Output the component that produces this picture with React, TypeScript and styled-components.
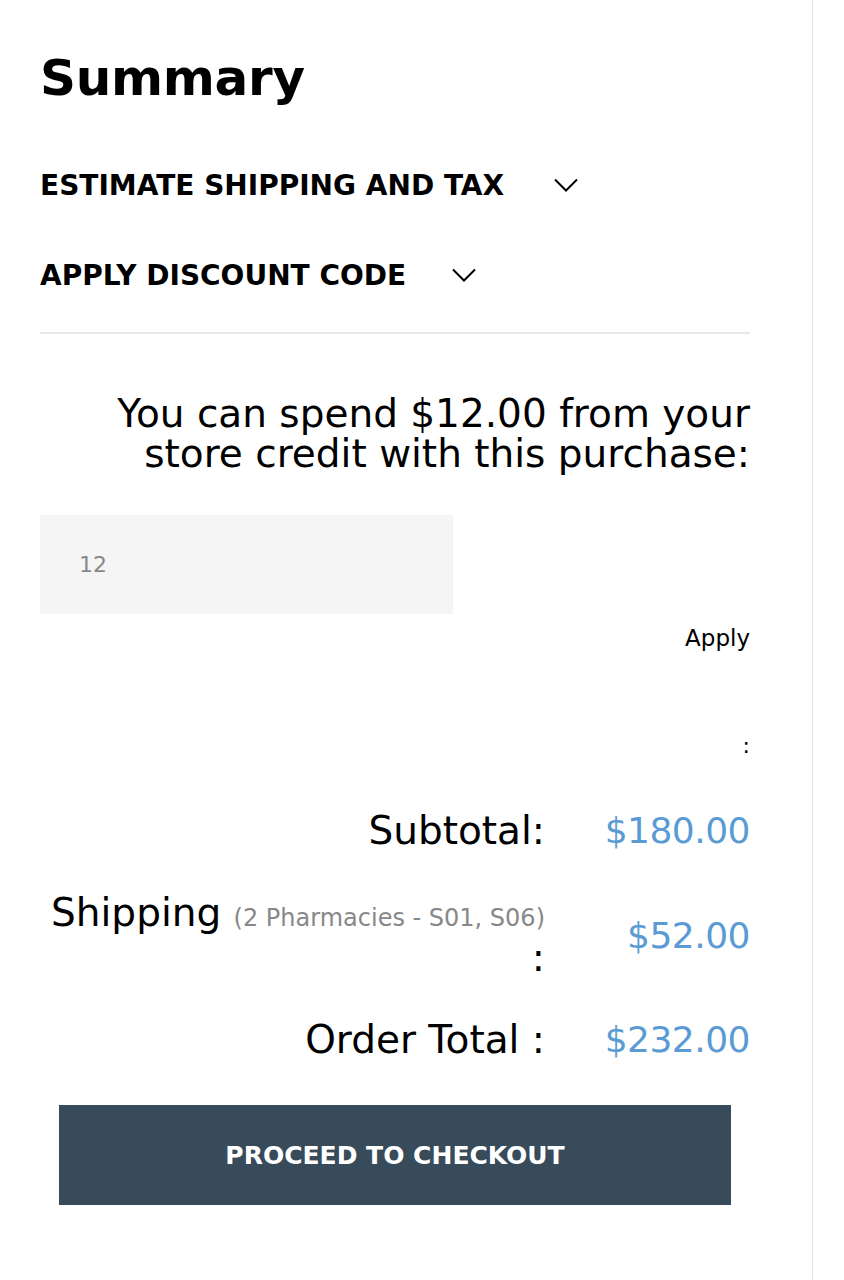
import styled, { createGlobalStyle } from "styled-components";

const GlobalStyle = createGlobalStyle`
  body {
    margin: 0;
    background: #fff;
    font-family: "DejaVu Sans", "Liberation Sans", sans-serif;
    color: #000;
  }
`;

const Page = styled.div`
  display: flex;
  width: 844px;
  min-height: 1280px;
`;

const Panel = styled.aside`
  width: 813px;
  border-right: 1px solid #e6e6e6;
  padding: 48px 62px 0 40px;
  box-sizing: border-box;
`;

const Title = styled.h1`
  margin: 0 0 32px;
  font-size: 50px;
  line-height: 60px;
  font-weight: 700;
  letter-spacing: -0.3px;
`;

const AccordionRow = styled.button<{ $gap: number }>`
  display: flex;
  align-items: center;
  gap: ${(p) => p.$gap}px;
  height: 90px;
  padding: 0;
  border: 0;
  background: none;
  font-family: inherit;
  font-size: 28px;
  font-weight: 700;
  color: #000;
  text-transform: uppercase;
  cursor: pointer;
`;

const Divider = styled.hr`
  margin: 12px 0 0;
  border: 0;
  border-top: 2px solid #e8e8e8;
`;

const CreditNote = styled.p`
  margin: 60px 0 0;
  text-align: right;
  font-size: 39px;
  line-height: 40px;
  font-weight: 400;
`;

const CreditInput = styled.input`
  display: block;
  width: 413px;
  height: 99px;
  margin-top: 41px;
  padding: 0 0 0 39px;
  box-sizing: border-box;
  border: 0;
  background: #f5f5f5;
  font-family: inherit;
  font-size: 22px;
  color: #888;
  outline: none;
`;

const ApplyRow = styled.div`
  display: flex;
  justify-content: flex-end;
  margin-top: 9px;
`;

const ApplyButton = styled.button`
  padding: 0;
  border: 0;
  background: none;
  font-family: inherit;
  font-size: 23px;
  line-height: 30px;
  color: #000;
  cursor: pointer;
`;

const EmptyTotal = styled.div`
  margin-top: 78px;
  text-align: right;
  font-size: 22px;
  line-height: 30px;
`;

const Totals = styled.div`
  display: grid;
  grid-template-columns: 1fr 200px;
  align-items: center;
  row-gap: 42px;
  margin-top: 50px;
`;

const Label = styled.div`
  padding: 0 5px 0 6px;
  text-align: right;
  font-size: 39px;
  line-height: 40px;
`;

const Note = styled.span`
  font-size: 24px;
  color: #888;
  white-space: nowrap;
`;

const Amount = styled.div`
  text-align: right;
  font-size: 36px;
  line-height: 40px;
  color: #5a9bd4;
  letter-spacing: -0.5px;
`;

const Checkout = styled.button`
  display: block;
  width: calc(100% - 38px);
  height: 100px;
  margin: 45px auto 0;
  border: 0;
  background: #374b5a;
  color: #fff;
  font-family: inherit;
  font-size: 25px;
  font-weight: 700;
  text-transform: uppercase;
  cursor: pointer;
`;

const Chevron = () => (
  <svg width="24" height="14" viewBox="0 0 24 14" fill="none">
    <path d="M1 1.5L12 12.5L23 1.5" stroke="#000" strokeWidth="2" />
  </svg>
);

export default function App() {
  return (
    <>
      <GlobalStyle />
      <Page>
        <Panel>
          <Title>Summary</Title>
          <AccordionRow $gap={50}>
            Estimate Shipping and Tax
            <Chevron />
          </AccordionRow>
          <AccordionRow $gap={46}>
            Apply Discount Code
            <Chevron />
          </AccordionRow>
          <Divider />
          <CreditNote>
            You can spend $12.00 from your
            <br />
            store credit with this purchase:
          </CreditNote>
          <CreditInput defaultValue="12" />
          <ApplyRow>
            <ApplyButton>Apply</ApplyButton>
          </ApplyRow>
          <EmptyTotal>:</EmptyTotal>
          <Totals>
            <Label>Subtotal:</Label>
            <Amount>$180.00</Amount>
            <Label>
              Shipping <Note>(2 Pharmacies - S01, S06)</Note> :
            </Label>
            <Amount>$52.00</Amount>
            <Label>Order Total :</Label>
            <Amount>$232.00</Amount>
          </Totals>
          <Checkout>Proceed to Checkout</Checkout>
        </Panel>
      </Page>
    </>
  );
}
